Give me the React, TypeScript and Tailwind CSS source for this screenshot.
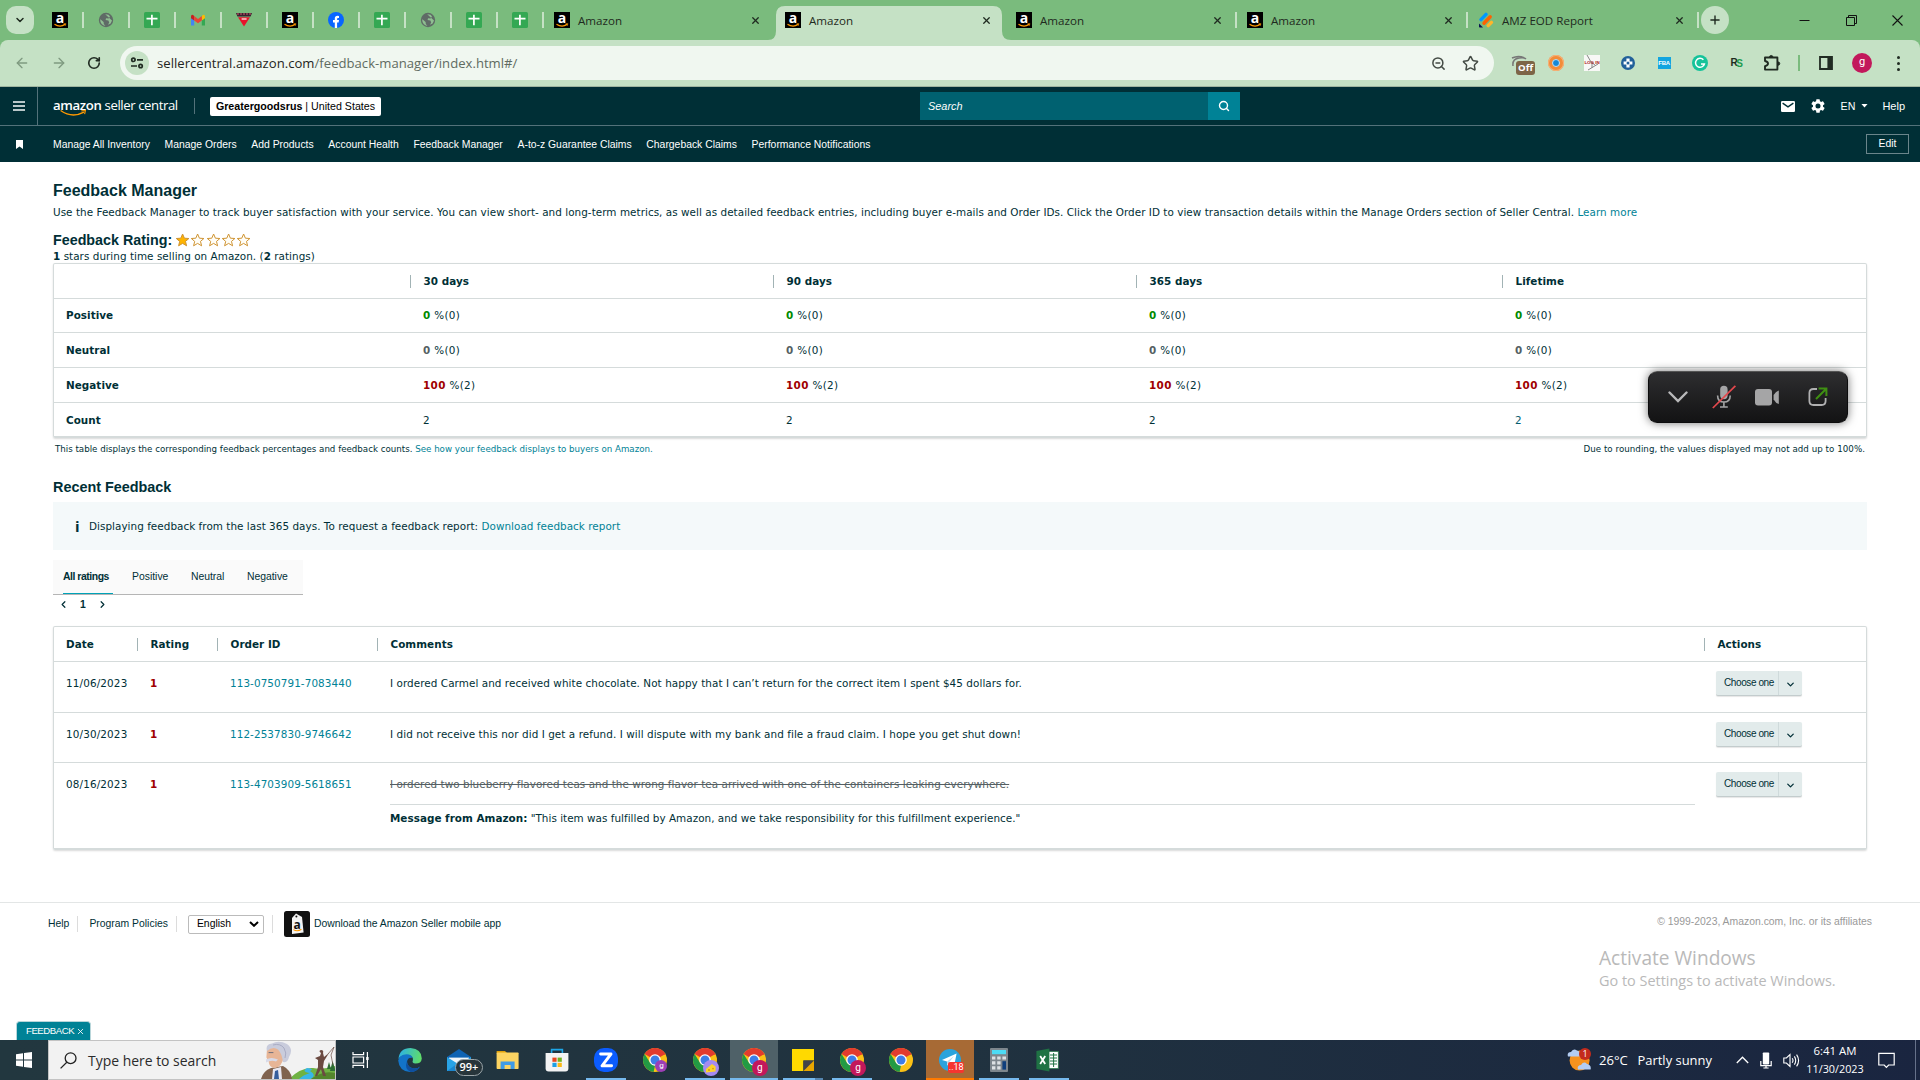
import React from 'react';
import { ArrowLeft, ArrowRight, ChevronDown, ChevronLeft, ChevronRight, Plus, RotateCw, Search, Star, X, ZoomOut } from 'lucide-react';
import clsx from 'clsx';

/* ---------- Favicons ---------- */

const AmazonIcon = () => (
    <svg viewBox="0 0 16 16" className="size-4 shrink-0 overflow-visible">
        <rect width="16" height="16" fill="#000" />
        <text x="8" y="10.8" textAnchor="middle" fontSize="14" fontWeight="700" fill="#fff" fontFamily="Open Sans, sans-serif">a</text>
        <path d="M2.5 12.2 Q8 15.8 13 12.4" fill="none" stroke="#f90" strokeWidth="1.3" />
        <path d="M11.6 11.9 L13.8 11.7 L13.3 13.7" fill="none" stroke="#f90" strokeWidth="0.8" />
    </svg>
);

const GlobeIcon = () => (
    <svg viewBox="0 0 16 16" className="size-4 shrink-0">
        <circle cx="8" cy="8" r="7.2" fill="#5f6b66" />
        <path d="M2.4 7.2 L5.6 10 L5.8 12 L7.4 14 A6 6 0 0 1 2.2 8Z M7.2 2.2 L10.5 2.8 L12 4.4 L10.6 6.4 L8 6.2 L7.6 8 L10.4 8.6 L11.2 10.4 L10 12.8 L12.6 11.6 L14 8.4" fill="#8fbf92" />
    </svg>
);

const SheetsIcon = () => (
    <svg viewBox="0 0 16 16" className="size-4 shrink-0">
        <rect width="16" height="16" rx="1.6" fill="#34a853" />
        <path d="M2.5 6.6 H13.5 M7.9 2.8 V13.2" stroke="#fff" strokeWidth="1.7" />
    </svg>
);

const GmailIcon = () => (
    <svg viewBox="0 0 16 16" className="size-4 shrink-0">
        <path d="M1 4 V13.6 H4.2 V6.4Z" fill="#4285f4" />
        <path d="M15 4 V13.6 H11.8 V6.4Z" fill="#34a853" />
        <path d="M11.8 4 L13 3 Q15 2.4 15 4.6 V6.2 L11.8 8.4Z" fill="#fbbc04" />
        <path d="M4.2 4 L3 3 Q1 2.4 1 4.6 V6.2 L4.2 8.4Z" fill="#c5221f" />
        <path d="M4.2 4 L8 6.9 L11.8 4 V8.4 L8 11.2 L4.2 8.4Z" fill="#ea4335" />
    </svg>
);

const TriangleIcon = () => (
    <svg viewBox="0 0 16 16" className="size-4 shrink-0">
        <path d="M0 1 H16 L14.6 4.6 H1.4Z" fill="#3a2230" />
        <path d="M1 2 H15" stroke="#d05a6a" strokeWidth="1" strokeDasharray="2 1" />
        <path d="M2 5.2 H14 L8 14.6Z" fill="#e8132b" />
        <path d="M5.6 7 H10.6" stroke="#fff" strokeWidth="1.2" />
    </svg>
);

const FacebookIcon = () => (
    <svg viewBox="0 0 16 16" className="size-4 shrink-0">
        <circle cx="8" cy="8" r="8" fill="#0866ff" />
        <path d="M6.8 16 V10.4 H5 V8 H6.8 V6.6 Q6.8 3.8 9.6 3.8 L11 3.9 V6 H10 Q9.1 6 9.1 7 V8 H11 L10.6 10.4 H9.1 V16Z" fill="#fff" />
    </svg>
);

const JotformIcon = () => (
    <svg viewBox="0 0 16 16" className="size-4 shrink-0">
        <g strokeLinecap="round" fill="none" strokeWidth="3.4">
            <path d="M3 7.6 L8 2.4" stroke="#0099ff" />
            <path d="M6 11.2 L12.2 4.8" stroke="#ff6100" />
            <path d="M10.2 13.6 L13.4 10.4" stroke="#ffb629" />
        </g>
        <path d="M1 11.4 L5 15.6 H1.8 Q1 15.6 1 14.8Z" fill="#0a1551" />
    </svg>
);

const pinned = [AmazonIcon, GlobeIcon, SheetsIcon, GmailIcon, TriangleIcon, AmazonIcon, FacebookIcon, SheetsIcon, GlobeIcon, SheetsIcon, SheetsIcon];

const tabs = [
    { title: 'Amazon', Icon: AmazonIcon, active: false, divider: false },
    { title: 'Amazon', Icon: AmazonIcon, active: true, divider: false },
    { title: 'Amazon', Icon: AmazonIcon, active: false, divider: true },
    { title: 'Amazon', Icon: AmazonIcon, active: false, divider: true },
    { title: 'AMZ EOD Report', Icon: JotformIcon, active: false, divider: true },
];

/* ---------- Browser chrome ---------- */

const TabStrip = () => (
    <div className="flex h-10 bg-[#7abb7d] text-[#1f2a20]">
        <div className="flex w-[38px] items-center pl-1.5">
            <div className="flex size-7 items-center justify-center rounded-[10px] bg-[#c5e1c5]">
                <ChevronDown size={12} strokeWidth={3} />
            </div>
        </div>
        <div className="flex items-center">
            {pinned.map((Icon, i) => (
                <div key={i} className="flex w-[46px] items-center justify-between pl-3.5">
                    <Icon />
                    <div className="h-4 w-0.5 bg-[#c5e1c5]" />
                </div>
            ))}
        </div>
        <div className="flex">
            {tabs.map((t, i) => (
                <div key={i} className="relative flex w-[231px] items-center">
                    {t.active && (
                        <svg viewBox="0 0 245 34" className="absolute -left-[7px] top-1.5 h-[34px] w-[245px]">
                            <path d="M0 34 Q8 34 8 25 V9 Q8 0 17 0 H225 Q234 0 234 9 V25 Q234 34 243 34Z" fill="#c5e1c5" />
                        </svg>
                    )}
                    <div className="relative flex flex-1 items-center pl-[10px]">
                        <t.Icon />
                        <span className="ml-2 flex-1 pt-0.5 font-['Open_Sans',sans-serif] text-[11.6px] leading-4">{t.title}</span>
                        <X size={11} strokeWidth={2.8} className="mr-[12px]" />
                        <div className={clsx('h-4 w-0.5', t.divider && 'bg-[#c5e1c5]')} />
                    </div>
                </div>
            ))}
        </div>
        <div className="flex flex-1 items-center">
            <div className="ml-0.5 flex size-7 items-center justify-center rounded-full bg-[#c5e1c5]">
                <Plus size={14} strokeWidth={2.4} />
            </div>
            <div className="ml-auto flex items-center gap-[35.5px] pr-[17px] text-[#111]">
                <svg className="size-[11px]" viewBox="0 0 11 11"><path d="M0.5 5.5 H10.5" stroke="currentColor" /></svg>
                <svg className="size-[11px]" viewBox="0 0 11 11" fill="none" stroke="currentColor"><path d="M0.5 2.5 H8.5 V10.5 H0.5Z M2.5 2.5 V0.5 H10.5 V8.5 H8.5" /></svg>
                <svg className="size-[11px]" viewBox="0 0 11 11" fill="none" stroke="currentColor" strokeWidth="1.1"><path d="M0.5 0.5 L10.5 10.5 M10.5 0.5 L0.5 10.5" /></svg>
            </div>
        </div>
    </div>
);

const Ext: React.FC<{ children: React.ReactNode }> = ({ children }) => (
    <div className="relative flex w-9 items-center justify-center">{children}</div>
);

const Toolbar = () => (
    <div className="bg-[#7abb7d]">
        <div className="flex h-[47px] items-center rounded-t-lg border-b border-[#9fb5a0] bg-[#c5e1c5] text-[#202b22]">
            <div className="flex w-[120px] items-center gap-[20.5px] pl-[14px]">
                <ArrowLeft size={16} className="text-[#7f9a80]" />
                <ArrowRight size={16} className="text-[#7f9a80]" />
                <RotateCw size={14} strokeWidth={2.8} />
            </div>
            <div className="flex h-[34px] w-[1374px] items-center rounded-full bg-[#f0f7f0] pl-[5px]">
                <div className="flex size-6 items-center justify-center rounded-full bg-[#c5e1c5]">
                    <svg viewBox="0 0 14 12" className="h-3 w-3.5" fill="none" stroke="currentColor" strokeWidth="1.7">
                        <circle cx="3.4" cy="2.8" r="1.7" />
                        <path d="M7 2.8 H13 M1 9 H7" />
                        <circle cx="10.6" cy="9" r="1.7" />
                    </svg>
                </div>
                <div className="ml-2 font-['Open_Sans',sans-serif] text-[13.1px] leading-5 tracking-[0.02px] text-[#1f2420]">
                    sellercentral.amazon.com<span className="text-[#5f6b61]">/feedback-manager/index.html#/</span>
                </div>
                <div className="ml-auto flex items-center gap-4 pr-[15px] text-[#444b45]">
                    <ZoomOut size={15} strokeWidth={2.4} />
                    <Star size={17} strokeWidth={2.1} />
                </div>
            </div>
            <div className="flex h-full items-center pl-2">
                <Ext>
                    <svg viewBox="0 0 18 12" className="-mt-1 h-3 w-[18px]"><path d="M2 11 Q1 4 8 3 Q13 2 15 4 M1 3 Q7 0 13 2.6" fill="none" stroke="#777" strokeWidth="1.5" /></svg>
                    <div className="absolute left-[14px] top-0.5 rounded-[3px] bg-[#7d6547] px-0.5 font-['Open_Sans',sans-serif] text-[9.6px] font-bold leading-[14px] text-white">Off</div>
                </Ext>
                <Ext>
                    <div className="flex size-4 items-center justify-center rounded-full bg-[#f28c3a] ring-1 ring-[#f7b27a] ring-inset">
                        <div className="size-2 rounded-full border border-[#bfe0f7] bg-[#1688d8]" />
                    </div>
                </Ext>
                <Ext>
                    <svg viewBox="0 0 16 16" className="size-4 overflow-visible">
                        <rect width="16" height="16" fill="#f8f8f6" />
                        <path d="M3 0 L7 7 L11 10 M4 15 L14 9 M8 7 V13" stroke="#888" strokeWidth="1" fill="none" />
                        <text x="8" y="8.6" textAnchor="middle" fontSize="4.4" fontWeight="700" fill="#a11" fontFamily="Liberation Sans">LOG IN</text>
                    </svg>
                </Ext>
                <Ext>
                    <svg viewBox="0 0 14 14" className="size-3.5">
                        <circle cx="7" cy="7" r="7" fill="#22609a" />
                        <path d="M5.4 2.6 H8.6 V5.4 H11.4 V8.6 H8.6 V11.4 H5.4 V8.6 H2.6 V5.4 H5.4Z" fill="#fff" />
                        <circle cx="7" cy="7" r="1.5" fill="#22609a" />
                    </svg>
                </Ext>
                <Ext>
                    <div className="h-3 w-[13px] bg-[#12a5e0] pt-[3px] text-center font-['Liberation_Sans',sans-serif] text-[6px] font-bold leading-[6px] tracking-tighter text-white">FBA</div>
                </Ext>
                <Ext>
                    <svg viewBox="0 0 16 16" className="size-4">
                        <circle cx="8" cy="8" r="8" fill="#15c39a" />
                        <path d="M11.4 4.8 A4.5 4.5 0 1 0 12.4 9 H9" fill="none" stroke="#fff" strokeWidth="1.5" />
                    </svg>
                </Ext>
                <Ext>
                    <div className="font-['Liberation_Sans',sans-serif] text-[10px] font-bold leading-3 tracking-[-1.5px] text-[#1d2b20]">R<span className="relative top-px text-[#1d9b4e]">S</span></div>
                </Ext>
                <Ext>
                    <svg viewBox="0 0 18 18" className="size-[18px]" fill="none" stroke="currentColor" strokeWidth="1.9">
                        <path d="M2 3.5 H14.4 V15.6 H2 V12.2 Q5 11.6 5 9.6 Q5 7.6 2 7Z" strokeLinejoin="round" />
                        <path d="M6.4 3.4 Q6.4 1.4 8.2 1.4 Q10 1.4 10 3.4Z M14.6 7.8 Q16.8 7.8 16.8 9.6 Q16.8 11.4 14.6 11.4Z" fill="currentColor" strokeWidth="0.8" />
                    </svg>
                </Ext>
                <div className="flex w-[18px] justify-center"><div className="h-4 w-0.5 bg-[#7abb7d]" /></div>
                <Ext>
                    <svg viewBox="0 0 14 14" className="size-3.5"><path d="M1 1 H13 V13 H1Z" fill="none" stroke="currentColor" strokeWidth="1.8" /><path d="M8.4 1 H13 V13 H8.4Z" fill="currentColor" /></svg>
                </Ext>
                <Ext>
                    <div className="size-5 rounded-full bg-[#c2185b] text-center font-['Roboto',sans-serif] text-[11px] leading-[18px] text-white">g</div>
                </Ext>
                <Ext>
                    <div className="flex flex-col gap-[3px]">
                        {[0, 1, 2].map((i) => <div key={i} className="size-[3px] rounded-full bg-current" />)}
                    </div>
                </Ext>
            </div>
        </div>
    </div>
);

/* ---------- Seller Central header ---------- */

const navLinks = ['Manage All Inventory', 'Manage Orders', 'Add Products', 'Account Health', 'Feedback Manager', 'A-to-z Guarantee Claims', 'Chargeback Claims', 'Performance Notifications'];

const Header = () => (
    <header className="bg-[#002f36] text-white">
        <div className="flex h-[39px] items-center border-b border-[#53727a] text-[10.66px] leading-4">
            <div className="flex h-full w-[38px] items-center border-r border-[#53727a] pl-[13px]">
                <div className="flex flex-col gap-[2px]">
                    {[0, 1, 2].map((i) => <div key={i} className="h-[2px] w-3 bg-[#b9c7c9]" />)}
                </div>
            </div>
            <div className="relative ml-[15px] flex w-[128px] -translate-y-[1.5px] items-baseline gap-[3px] whitespace-nowrap font-['Open_Sans',sans-serif] leading-4">
                <span className="text-[13.2px] font-semibold tracking-[-0.35px]">amazon</span>
                <span className="text-[13.2px] tracking-[-0.42px]">seller central</span>
                <svg viewBox="0 0 28 8" className="absolute left-[7px] top-[13px] h-2 w-7" fill="none" stroke="#f90">
                    <path d="M0.6 1 Q12 9 24 2.6" strokeWidth="1.4" />
                    <path d="M21.4 1.4 L25.4 1 L24.6 4.6" strokeWidth="1.1" />
                </svg>
            </div>
            <div className="ml-[13px] h-4 w-px bg-[#53727a]" />
            <div className="ml-[15px] flex h-[19px] w-[171px] items-center justify-center rounded-xs bg-white text-black">
                <span className="whitespace-pre"><b>Greatergoodsrus</b> | United States</span>
            </div>
            <div className="ml-[539px] flex h-7 w-[288px] items-center bg-[#006170] pl-2 text-[10.9px] italic">Search</div>
            <div className="flex h-7 w-8 items-center justify-center bg-[#008296]"><Search size={12} strokeWidth={2.8} /></div>
            <div className="ml-auto flex items-center pr-[15px]">
                <svg viewBox="0 0 14 11" className="mr-4 h-[11px] w-3.5">
                    <rect width="14" height="11" rx="1.2" fill="#fff" />
                    <path d="M1.6 2.2 L7 5.8 L12.4 2.2" fill="none" stroke="#002f36" strokeWidth="1.4" />
                </svg>
                <svg viewBox="2 2 20 20" className="mr-4 size-3.5">
                    <path fill="#fff" d="M19.14 12.94c.04-.3.06-.61.06-.94s-.02-.64-.07-.94l2.03-1.58a.49.49 0 0 0 .12-.61l-1.92-3.32a.49.49 0 0 0-.59-.22l-2.39.96a7 7 0 0 0-1.62-.94l-.36-2.54A.48.48 0 0 0 13.92 2.4h-3.84a.48.48 0 0 0-.47.41l-.36 2.54c-.59.24-1.13.57-1.62.94l-2.39-.96a.48.48 0 0 0-.59.22L2.74 8.87a.48.48 0 0 0 .12.61l2.03 1.58a6 6 0 0 0 0 1.88l-2.03 1.58a.49.49 0 0 0-.12.61l1.92 3.32c.12.22.37.29.59.22l2.39-.96c.5.38 1.03.7 1.62.94l.36 2.54c.05.24.24.41.48.41h3.84c.24 0 .44-.17.47-.41l.36-2.54a7 7 0 0 0 1.62-.94l2.39.96c.22.08.47 0 .59-.22l1.92-3.32a.48.48 0 0 0-.12-.61zM12 15.6A3.6 3.6 0 1 1 12 8.4a3.6 3.6 0 0 1 0 7.2" />
                </svg>
                <span className="mr-[6px]">EN</span>
                <svg viewBox="0 0 7 4" className="mr-[14px] h-[3.5px] w-[7px]"><path d="M0 0 H7 L3.5 4Z" fill="#fff" /></svg>
                <span className="text-[11px]">Help</span>
            </div>
        </div>
        <nav className="flex h-9 items-center text-[10.38px] leading-4">
            <svg viewBox="0 0 7 9" className="ml-4 h-[9px] w-[7px]"><path d="M0 0 H7 V9 L3.5 6.4 L0 9Z" fill="#fff" /></svg>
            <div className="ml-[30px] flex gap-[14.7px] pt-0.5">
                {navLinks.map((l) => <span key={l}>{l}</span>)}
            </div>
            <div className="ml-auto mr-[11px] flex h-5 w-[43px] items-center justify-center border border-[#6a858b]">Edit</div>
        </nav>
    </header>
);

/* ---------- Feedback summary ---------- */

const summary = [
    { label: 'Positive', value: '0', rest: ' %(0)', color: 'text-[#008a00]', height: 'h-[34px]' },
    { label: 'Neutral', value: '0', rest: ' %(0)', color: 'text-[#555f63]', height: 'h-[35px]' },
    { label: 'Negative', value: '100', rest: ' %(2)', color: 'text-[#a00000]', height: 'h-[35px]' },
];

const summaryCols = 'grid grid-cols-[357px_363px_363px_366px_1fr]';

const Divider = () => <div className="h-[13px] w-px shrink-0 bg-[#a2b3b5]" />;

const SummaryTable = () => (
    <div className="w-[1814px] rounded-xs border border-b-2 border-[#d5dbdb] shadow-[0_1px_2px_rgba(0,0,0,0.15)]">
        <div className={clsx(summaryCols, 'h-[35px] items-center border-b border-[#d5dbdb] font-bold')}>
            <span />
            {['30 days', '90 days', '365 days', 'Lifetime'].map((h) => (
                <div key={h} className="-ml-px flex items-center">
                    <Divider />
                    <span className="pl-[12.5px]">{h}</span>
                </div>
            ))}
        </div>
        {summary.map((r) => (
            <div key={r.label} className={clsx(summaryCols, r.height, 'items-center border-b border-[#d5dbdb] pb-px')}>
                <b className="pl-3">{r.label}</b>
                {[0, 1, 2, 3].map((i) => (
                    <span key={i} className="whitespace-pre pl-3 tracking-[0.35px]"><b className={r.color}>{r.value}</b>{r.rest}</span>
                ))}
            </div>
        ))}
        <div className={clsx(summaryCols, 'h-[33px] items-center')}>
            <b className="pl-3">Count</b>
            {[0, 1, 2].map((i) => <span key={i} className="pl-3">2</span>)}
            <span className="pl-3 text-[#055d70]">2</span>
        </div>
    </div>
);

const Stars = () => (
    <div className="ml-[3px] flex pb-px">
        {[0, 1, 2, 3, 4].map((i) => (
            <svg key={i} viewBox="0 0 15 14" className="h-3.5 w-[15.2px]">
                <path d="M7.5 1 L9.3 5.2 L13.8 5.5 L10.4 8.4 L11.5 12.8 L7.5 10.4 L3.5 12.8 L4.6 8.4 L1.2 5.5 L5.7 5.2Z" fill={i === 0 ? '#ffb400' : '#fffdf6'} stroke="#cf9433" strokeWidth="1" />
            </svg>
        ))}
    </div>
);

/* ---------- Recent feedback ---------- */

const feedback = [
    { date: '11/06/2023', order: '113-0750791-7083440', text: 'I ordered Carmel and received white chocolate. Not happy that I can’t return for the correct item I spent $45 dollars for.' },
    { date: '10/30/2023', order: '112-2537830-9746642', text: 'I did not receive this nor did I get a refund. I will dispute with my bank and file a fraud claim. I hope you get shut down!' },
    { date: '08/16/2023', order: '113-4703909-5618651', text: 'I ordered two blueberry flavored teas and the wrong flavor tea arrived with one of the containers leaking everywhere.', message: '"This item was fulfilled by Amazon, and we take responsibility for this fulfillment experience."' },
];

const feedbackCols = 'grid grid-cols-[84px_80px_160px_1327px_1fr]';

const ChooseButton = () => (
    <div className="-ml-px mt-[9px] flex h-[25px] w-[86px] rounded-xs border-b border-[#c3cccd] bg-[#e2ebeb] font-['Liberation_Sans',sans-serif] text-[10px] tracking-[-0.4px] shadow-[0_1px_1px_rgba(0,0,0,0.1)]">
        <div className="w-[63px] whitespace-nowrap border-r border-[#cfdadb] pl-2 leading-6">Choose one</div>
        <div className="flex flex-1 items-center justify-center pt-0.5"><ChevronDown size={11} strokeWidth={2.8} /></div>
    </div>
);

const FeedbackTable = () => (
    <div className="w-[1814px] rounded-xs border border-b-2 border-[#d5dbdb] shadow-[0_1px_2px_rgba(0,0,0,0.15)]">
        <div className={clsx(feedbackCols, 'h-[35px] items-center border-b border-[#d5dbdb] font-bold')}>
            <span className="pl-3">Date</span>
            {['Rating', 'Order ID', 'Comments', 'Actions'].map((h) => (
                <div key={h} className="-ml-px flex items-center">
                    <Divider />
                    <span className="pl-[12.5px]">{h}</span>
                </div>
            ))}
        </div>
        {feedback.map((f, i) => (
            <div key={f.order} className={clsx(feedbackCols, i === 0 ? 'h-[51px]' : i === 1 ? 'h-[50px]' : 'h-[85px]', i < 2 && 'border-b border-[#d5dbdb]')}>
                <span className="pl-3 pt-[13px] tracking-[0.15px]">{f.date}</span>
                <b className="pl-3 pt-[13px] text-[#a00000]">1</b>
                <span className="pl-3 pt-[13px] tracking-[0.09px] text-[#008296]">{f.order}</span>
                <div className="pl-3 pr-[10px] pt-[13px]">
                    <p className={clsx(f.message ? 'text-[#555f63] line-through' : 'tracking-[0.07px]')}>{f.text}</p>
                    {f.message && (
                        <p className="mt-3 border-t border-[#d5dbdb] pt-[5px] tracking-[0.03px]"><b>Message from Amazon:</b> {f.message}</p>
                    )}
                </div>
                <div className="pl-3"><ChooseButton /></div>
            </div>
        ))}
    </div>
);

const Main = () => (
    <main className="h-[740px] pl-[53px] pt-[19px] font-['DejaVu_Sans',sans-serif] text-[10.4px] leading-4 tracking-[0.045px]">
        <h1 className="font-['Liberation_Sans',sans-serif] text-[16px] font-bold leading-5 tracking-normal">Feedback Manager</h1>
        <p className="mt-[3px] tracking-[0.05px]">
            Use the Feedback Manager to track buyer satisfaction with your service. You can view short- and long-term metrics, as well as detailed feedback entries, including buyer e-mails and Order IDs. Click the Order ID to view transaction details within the Manage Orders section of Seller Central. <a className="text-[#008296]">Learn more</a>
        </p>
        <div className="mt-[10px] flex h-5 items-center font-['Liberation_Sans',sans-serif] text-[14.3px] font-bold leading-5 tracking-normal">
            Feedback Rating: <Stars />
        </div>
        <p className="-mt-0.5 h-[15px]"><b>1</b> stars during time selling on Amazon. (<b>2</b> ratings)</p>
        <SummaryTable />
        <div className="flex w-[1814px] justify-between px-[2px] pt-[3px] text-[8.7px] tracking-[-0.01px]">
            <span>This table displays the corresponding feedback percentages and feedback counts. <a className="text-[#008296]">See how your feedback displays to buyers on Amazon.</a></span>
            <span className="tracking-[0.04px]">Due to rounding, the values displayed may not add up to 100%.</span>
        </div>
        <h2 className="mt-5 font-['Liberation_Sans',sans-serif] text-[14.4px] font-bold leading-5 tracking-normal">Recent Feedback</h2>
        <div className="mt-[5px] flex h-12 w-[1814px] items-center bg-[#f4f9fa] pl-[22px]">
            <span className="w-[14px] font-['Open_Sans',sans-serif] text-[15px] font-bold">i</span>
            <span>Displaying feedback from the last 365 days. To request a feedback report: <a className="text-[#008296]">Download feedback report</a></span>
        </div>
        <div className="mt-[10px] flex h-[35px] w-[250px] gap-[22.5px] border-b border-[#b5b5b5] bg-[#fafafa] pl-[10px] font-['Liberation_Sans',sans-serif] text-[10.4px] leading-[34px] tracking-normal">
            <span className="h-[34px] w-[50px] whitespace-nowrap border-b-[1.5px] border-[#00a3b8] font-bold tracking-[-0.45px]">All ratings</span>
            <span className="-ml-[3.5px]">Positive</span>
            <span>Neutral</span>
            <span>Negative</span>
        </div>
        <div className="flex h-[31px] items-start pl-[5px] pt-px">
            <ChevronLeft size={11} strokeWidth={2.6} className="mt-[3px]" />
            <span className="w-[28px] text-center font-['Liberation_Sans',sans-serif] font-bold leading-[17px]">1</span>
            <ChevronRight size={11} strokeWidth={2.6} className="mt-[3px]" />
        </div>
        <FeedbackTable />
    </main>
);

/* ---------- Footer ---------- */

const Footer = () => (
    <footer className="relative flex h-[138px] items-start border-t border-[#e3e6e6] pl-12 pt-[8px] text-[10.4px]">
        <div className="flex h-[26px] items-center leading-4">
            <span>Help</span>
            <div className="ml-2 h-4 w-px bg-[#dcdcdc]" />
            <span className="ml-[11px]">Program Policies</span>
            <div className="ml-2 h-4 w-px bg-[#dcdcdc]" />
            <div className="ml-[11px] flex h-[19px] w-[76px] items-center justify-between rounded-xs border border-[#bbb] pl-2 pr-1 text-black">
                <span>English</span>
                <svg viewBox="0 0 10 6" className="h-1.5 w-2.5"><path d="M1 1 L5 4.8 L9 1" fill="none" stroke="#000" strokeWidth="2" /></svg>
            </div>
            <div className="ml-2 h-[18px] w-px bg-[#dcdcdc]" />
            <svg viewBox="0 0 26 26" className="ml-[11px] size-[26px] overflow-visible">
                <rect width="26" height="26" rx="2.5" fill="#111" />
                <path d="M8 7 L12 2.6 L18 6 L19.6 21.4 L8 23Z" fill="#f4f4f4" />
                <circle cx="12.4" cy="5.6" r="1" fill="#111" />
                <text x="13" y="17.6" textAnchor="middle" fontSize="12" fontWeight="700" fill="#111" fontFamily="Open Sans, sans-serif">a</text>
                <path d="M9.4 18.6 Q13.4 21.2 17.4 18.2" fill="none" stroke="#f90" strokeWidth="1.1" />
            </svg>
            <span className="ml-1">Download the Amazon Seller mobile app</span>
        </div>
        <span className="ml-auto mr-12 mt-[3px] leading-4 text-[#999]">© 1999-2023, Amazon.com, Inc. or its affiliates</span>

        {/* Activation watermark */}
        <div className="absolute left-[1599px] top-[43px] font-['Open_Sans',sans-serif] text-[#b9b9b9]">
            <p className="text-[19.1px] leading-6">Activate Windows</p>
            <p className="text-[14.45px] leading-[21px]">Go to Settings to activate Windows.</p>
        </div>

        {/* Feedback tab */}
        <div className="absolute bottom-0 left-4 flex h-[19px] w-[75px] items-center rounded-t border border-b-0 border-[#b9d6da] bg-[#008296] pl-[9px] text-[9.6px] leading-4 tracking-[-0.45px] text-white">
            FEEDBACK <X size={9} strokeWidth={2.2} className="ml-0.5" />
        </div>
    </footer>
);

/* ---------- Floating call controls ---------- */

const CallControls = () => (
    <div className="absolute left-[1648px] top-[371px] flex h-[52px] w-[200px] items-center rounded-[9px] border border-[#0c0c0d] border-t-[#555] bg-linear-to-b from-[#2e2e30] to-[#131314] pl-[19px] shadow-[0_0_10px_rgba(0,0,0,0.55)]">
        <svg viewBox="0 0 20 12" className="h-3 w-5"><path d="M1.5 1.5 L10 10 L18.5 1.5" fill="none" stroke="#b9b9ba" strokeWidth="2.4" strokeLinecap="round" /></svg>
        <svg viewBox="0 0 24 24" className="ml-6 size-6">
            <rect x="8.2" y="0.8" width="7.4" height="13.4" rx="3.7" fill="#a5a5a6" />
            <path d="M5.6 10.4 Q5.6 17 11.9 17 Q18.2 17 18.2 10.4 M11.9 17 V21.6 M8 22 H15.8" fill="none" stroke="#a5a5a6" strokeWidth="1.6" />
            <path d="M0.8 23 L23.4 0.8" stroke="#e5484d" strokeWidth="1.7" />
        </svg>
        <svg viewBox="0 0 24 17" className="ml-[19px] h-[17px] w-6" fill="#a5a5a6">
            <rect width="17" height="16.4" rx="3" />
            <path d="M18.6 6 Q21 2 23.8 1.4 V15 Q21 14.4 18.6 10.4Z" />
        </svg>
        <svg viewBox="0 0 20 20" className="ml-[29px] size-5" fill="none" strokeWidth="1.8">
            <path d="M9 2 H5.4 Q1.4 2 1.4 6 V14 Q1.4 18 5.4 18 H13.6 Q17.6 18 17.6 14 V11" stroke="#b0b0b1" />
            <path d="M8 12 L18 2 M10.6 1.6 H18.4 V9" stroke="#3f8f12" strokeWidth="2" />
        </svg>
    </div>
);

/* ---------- Taskbar ---------- */

const ChromeIcon = () => (
    <svg viewBox="0 0 24 24" className="size-6">
        <circle cx="12" cy="12" r="12" fill="#fbc116" />
        <path d="M12 12 L1.6 6 A12 12 0 0 1 22.4 6Z" fill="#e33b2e" />
        <path d="M1.6 6 L7.2 15 L12 17.4 L10.6 23.9 A12 12 0 0 1 1.6 6Z" fill="#229a44" />
        <path d="M12 6.4 H22.6 L22.4 6 H12Z" fill="#e33b2e" />
        <circle cx="12" cy="12" r="5.8" fill="#fff" />
        <circle cx="12" cy="12" r="4.5" fill="#3f7de8" />
    </svg>
);

const ProfileBadge: React.FC<{ className: string; children: React.ReactNode }> = ({ className, children }) => (
    <div className={clsx("absolute flex items-center justify-center rounded-full font-['Roboto',sans-serif] leading-none text-white", className)}>{children}</div>
);

const apps: { icon: React.ReactNode; line?: string; bg?: string }[] = [
    {
        icon: (
            <svg viewBox="0 0 18 18" className="size-[18px]" fill="none" stroke="#fff" strokeWidth="1.2">
                <path d="M1 1 V3.6 H11.6 V1 M1 17 V14.4 H11.6 V17 M1 6 H11.6 V12 H1Z M15.4 1 V17" />
                <path d="M14.2 6 H16.6 V9 H14.2Z" fill="#fff" stroke="none" />
            </svg>
        ),
    },
    {
        icon: (
            <svg viewBox="0 0 24 24" className="size-6">
                <defs>
                    <linearGradient id="edgeTop" x1="0" x2="1" y1="0.2" y2="0.4"><stop stopColor="#2bb1e8" /><stop offset="1" stopColor="#5fdc6a" /></linearGradient>
                </defs>
                <path d="M0.4 11 Q1.6 0 12.6 0 Q23.6 1 23.8 10.4 Q23.4 15.6 17.4 15.6 Q13.6 15 14.8 12.8 Q16 8 10 7 Q3 6.6 0.4 11Z" fill="url(#edgeTop)" />
                <path d="M0.2 12.4 Q1.6 6.4 8.6 6.2 Q13.6 6.4 14.6 9.8 Q9.4 9 9 14 Q9.6 19.6 16 20.4 Q20 20.6 22 18.4 Q18.6 24 12 24 Q1 23 0.2 12.4Z" fill="#1374c8" />
                <path d="M9 13 Q9 20 16.4 20.4 Q20 20.6 22 18.4 Q18.6 24 12.6 24 Q6 21 9 13Z" fill="#0f4f9e" />
            </svg>
        ),
    },
    {
        icon: (
            <div className="relative size-6">
                <svg viewBox="0 0 24 24" className="size-6">
                    <path d="M0 9 L12 1 L24 9 V12 H0Z" fill="#0f63b3" />
                    <path d="M2 9.6 H22 V16 H2Z" fill="#f1f6fa" />
                    <path d="M0 9 L12 16.4 L24 9 V23 H0Z" fill="#29a3e6" />
                    <path d="M0 23 L14 13 L24 23Z" fill="#1b86cf" />
                </svg>
                <div className="absolute left-[8px] top-[11px] flex h-[17px] w-7 items-center justify-center rounded-full border border-[#9aa4a8] bg-[#27353b] font-['Open_Sans',sans-serif] text-[11px] font-semibold text-white">99+</div>
            </div>
        ),
    },
    {
        icon: (
            <svg viewBox="0 0 24 20" className="h-5 w-6">
                <path d="M0.6 1 H9 L11 3 H0.6Z" fill="#e0a10b" />
                <rect x="0.6" y="2.4" width="22" height="16.6" rx="0.8" fill="#fcd462" />
                <path d="M4.6 19 V11.4 H18.6 V19 H14.6 V15 H8.6 V19Z" fill="#3f9be6" />
            </svg>
        ),
    },
    {
        icon: (
            <svg viewBox="0 0 24 24" className="size-6">
                <path d="M6.6 6.6 V1.6 H17.4 V6.6" fill="none" stroke="#1ea7e8" strokeWidth="1.6" />
                <path d="M0.6 5 H23.4 V20.6 Q23.4 23.6 20.4 23.6 H3.6 Q0.6 23.6 0.6 20.6Z" fill="#f3f3f3" />
                <path d="M7.4 9.6 H11.6 V13.8 H7.4Z" fill="#e8471f" />
                <path d="M12.6 9.6 H16.8 V13.8 H12.6Z" fill="#72b11c" />
                <path d="M7.4 14.8 H11.6 V19 H7.4Z" fill="#1c9fe4" />
                <path d="M12.6 14.8 H16.8 V19 H12.6Z" fill="#fcb813" />
            </svg>
        ),
    },
    {
        icon: (
            <svg viewBox="0 0 24 24" className="size-6">
                <rect width="24" height="24" rx="10" fill="#0b5cff" />
                <path d="M6.6 6 H17 L8 17.8 H17.6" fill="none" stroke="#fff" strokeWidth="2.9" strokeLinejoin="round" strokeLinecap="round" />
            </svg>
        ),
        line: 'w-10 bg-[#76b9ed]',
    },
    { icon: <div className="relative"><ChromeIcon /><ProfileBadge className="left-3 top-3 size-3 bg-[#9c3fb5] text-[8px]">g</ProfileBadge></div> },
    {
        icon: (
            <div className="relative">
                <ChromeIcon />
                <ProfileBadge className="left-2.5 top-3 size-4 bg-[#a48bf2]">
                    <svg viewBox="0 0 12 12" className="size-3"><path d="M1 7 L7 2 L10.6 4.4 V9.6 L1 10.6Z" fill="#fbd22d" /><circle cx="4" cy="8" r="1" fill="#d99b00" /><circle cx="8" cy="6.6" r="0.9" fill="#d99b00" /></svg>
                </ProfileBadge>
            </div>
        ),
        line: 'w-10 bg-[#76b9ed]',
    },
    { icon: <div className="relative"><ChromeIcon /><ProfileBadge className="left-2.5 top-3 size-4 bg-[#c2185b] text-[10px]">g</ProfileBadge></div>, line: 'w-12 bg-[#76b9ed]', bg: 'bg-[#4f6168]' },
    {
        icon: (
            <svg viewBox="0 0 22 22" className="size-[22px]">
                <path d="M0 0 H22 V11.4 H11.4 V22 H0Z" fill="#ffd900" />
                <path d="M11.4 11.4 H22 L11.4 22Z" fill="#42434a" />
                <path d="M22 11.4 V22 H11.4Z" fill="#e9a600" />
            </svg>
        ),
        line: 'w-10 border-r-8 border-[#5686b0] bg-[#76b9ed]',
    },
    { icon: <div className="relative"><ChromeIcon /><ProfileBadge className="left-2.5 top-3 size-4 bg-[#c2185b] text-[10px]">g</ProfileBadge></div>, line: 'w-10 bg-[#76b9ed]' },
    { icon: <ChromeIcon /> },
    {
        icon: (
            <div className="relative">
                <svg viewBox="0 0 24 24" className="size-6">
                    <circle cx="12" cy="12" r="11" fill="#2ba3dc" />
                    <path d="M4 12 L18.6 5.6 L16 18.6 L11.6 15.4 L9.2 17.4 L9 13.6Z" fill="#fff" />
                    <path d="M9 13.6 L16 8 L11 14.4 L9.2 17.4Z" fill="#b8d9ea" />
                </svg>
                <div className="absolute left-[10px] top-[14px] h-[11px] w-4 rounded-xs bg-[#f5352f] text-center font-['Roboto',sans-serif] text-[9px] leading-[11px] text-white">..18</div>
            </div>
        ),
        line: 'w-12 bg-[#ff7a00]',
        bg: 'bg-[#a76a35]',
    },
    {
        icon: (
            <svg viewBox="0 0 18 24" className="h-6 w-[18px]">
                <rect width="18" height="24" rx="1" fill="#7d868d" />
                <rect x="2" y="2" width="14" height="4.2" fill="#4ddcf5" />
                <path d="M2 8.4 H5.4 V11.6 H2Z M7.2 8.4 H10.6 V11.6 H7.2Z M12.4 8.4 H16 V11.6 H12.4Z M2 13.2 H5.4 V16.6 H2Z M7.2 13.2 H10.6 V16.6 H7.2Z M2 18.2 H5.4 V21.6 H2Z M7.2 18.2 H10.6 V21.6 H7.2Z" fill="#dde1e4" />
                <path d="M12.4 13.2 H16 V21.6 H12.4Z" fill="#103f7c" />
            </svg>
        ),
        line: 'w-10 bg-[#76b9ed]',
    },
    {
        icon: (
            <svg viewBox="0 0 24 24" className="-ml-0.5 size-6">
                <path d="M12 3.4 H22.4 V20.6 H12Z" fill="#fff" stroke="#1f7244" strokeWidth="0.8" />
                <path d="M14 7 H21 M14 10 H21 M14 13 H21 M14 16 H21 M17.6 5 V19" stroke="#1f7244" strokeWidth="1" />
                <path d="M0.4 3 L13.4 0.6 V23.4 L0.4 21Z" fill="#1f7244" />
                <path d="M4.2 8 L9.2 16 M9.2 8 L4.2 16" stroke="#fff" strokeWidth="1.8" />
            </svg>
        ),
        line: 'w-10 bg-[#76b9ed]',
    },
];

/** Search highlight: a white-haired writer beside a river and a fishing figure */
const SearchArt = () => (
    <svg viewBox="0 0 74 38" className="h-[38px] w-[74px]">
        <path d="M28 38 Q40 26 52 27 Q62 29 74 25 V38Z" fill="#6fb244" />
        <path d="M46 27 Q40 31 49 32 Q42 34 38 38 H50 Q56 34 49 30 Q54 28 46 27Z" fill="#38b6ea" />
        <path d="M66 28 L68 21 L70 28Z M69 30 L71.6 20 L74 28 V30Z" fill="#2f6d34" />
        <path d="M50 38 Q62 29 74 32 V38Z" fill="#54852c" />
        <path d="M54 17 L59 15 L60 12 Q57 10 60 9 Q63 9 62 12 L63 16 L68 12 L63 20 L62 26 L65 35 H62 L60 28 L56 35 H54 L57 26 L57 19Z" fill="#6b4a41" />
        <path d="M67 13 L73 6 L70 14 L72 24" fill="none" stroke="#6b4a41" strokeWidth="0.7" />
        <path d="M0 38 Q2 30 10 27 L22 25 Q30 29 31 38Z" fill="#80634f" />
        <path d="M11 38 L12 28 L20 26 L21 38Z" fill="#e8e8f2" />
        <path d="M14 30 L17 29 L18 38 H13Z" fill="#355d9c" />
        <path d="M6 8 Q8 5 14 5 Q23 5 23 15 Q21 26 14 27 Q8 27 7.6 20 L5.4 16.4Z" fill="#e7b596" />
        <path d="M6 10 Q4 3 11 2.4 Q18 -1 26 3 Q33 8 28 16 Q27 22 22 21 Q21 13 17 8.6 Q12 5 6 10Z" fill="#c9ccdc" />
        <path d="M12 4 Q19 2 23 7 Q26 12 24 17" fill="none" stroke="#a9acc4" strokeWidth="1" />
        <path d="M5 18.6 Q10 15.4 17 18.6 L15 20.4 Q10 18.8 5 21.4Z" fill="#d8dae8" />
        <path d="M7.6 11.6 H12.4" stroke="#6f6f7c" strokeWidth="1" />
    </svg>
);

const Taskbar = () => (
    <div className="flex h-10 bg-linear-to-r from-[#22373f] via-[#20323f] to-[#1a2540] text-white">
        <div className="flex w-12 items-center pl-4">
            <svg viewBox="0 0 16 16" className="size-4" fill="#fff">
                <path d="M0 2.2 L7 1.2 V7.5 H0Z M8 1 L16 0 V7.5 H8Z M0 8.5 H7 V14.8 L0 13.8Z M8 8.5 H16 V16 L8 15Z" />
            </svg>
        </div>
        <div className="flex w-[288px] items-end border border-[#c3c3c3] bg-[#f2f2f2] text-[#2b2b2b]">
            <div className="flex h-full flex-1 items-center pl-[11px]">
                <svg viewBox="0 0 17 17" className="size-[17px]" fill="none" stroke="#222" strokeWidth="1.3"><circle cx="10.6" cy="6.2" r="5.4" /><path d="M6.8 10.2 L0.6 16.4" /></svg>
                <span className="ml-[11px] pt-px font-['Open_Sans',sans-serif] text-[13.95px] leading-5">Type here to search</span>
            </div>
            <SearchArt />
        </div>
        <div className="flex">
            {apps.map((a, i) => (
                <div key={i} className="relative flex w-[49.15px] justify-center">
                    <div className={clsx('flex h-full w-12 items-center justify-center', a.bg)}>{a.icon}</div>
                    {a.line && <div className={clsx('absolute bottom-0 h-0.5', a.line)} />}
                </div>
            ))}
        </div>
        <div className="ml-auto flex items-center font-['Open_Sans',sans-serif]">
            <div className="relative size-6">
                <svg viewBox="0 0 24 24" className="size-6">
                    <circle cx="12.6" cy="12.6" r="10" fill="#f6921e" />
                    <path d="M1 8.6 Q-0.4 4.4 4 4 Q6 0 10 2.4 Q14 3.4 12.6 8.6Z" fill="#b3cdf3" />
                    <path d="M11 21.6 Q9.6 17.6 14 17 Q17 12.6 20 16 Q24.6 17 23.6 21.6Z" fill="#b3cdf3" />
                </svg>
                <div className="absolute left-3 top-0 size-3 rounded-full bg-[#c42b1c] text-center text-[9px] leading-3">1</div>
            </div>
            <span className="ml-2 w-[38.5px] whitespace-nowrap text-[13.1px] leading-5">26°C</span>
            <span className="w-[98.5px] whitespace-nowrap text-[12.95px] leading-5">Partly sunny</span>
            <svg viewBox="0 0 13 8" className="h-2 w-[13px]"><path d="M0.8 7 L6.5 1.2 L12.2 7" fill="none" stroke="#fff" strokeWidth="1.3" /></svg>
            <svg viewBox="0 0 12 17" className="ml-[11px] h-[17px] w-3"><rect x="2.8" y="0.4" width="6.4" height="12" rx="0.8" fill="#fff" /><path d="M0.8 9 V13.6 H11.2 V9 M6 13.6 V16 M3.4 16 H8.6" fill="none" stroke="#fff" strokeWidth="1.2" /></svg>
            <svg viewBox="0 0 17 15" className="ml-[11px] h-[15px] w-[17px]" fill="none" stroke="#fff" strokeWidth="1.1">
                <path d="M0.8 5 H3.4 L7 1.6 V13.4 L3.4 10 H0.8Z M9.2 5.2 Q10.8 7.5 9.2 9.8 M11.4 3.4 Q14 7.5 11.4 11.6 M13.6 1.6 Q17.6 7.5 13.6 13.4" />
            </svg>
            <div className="ml-[6px] w-[58px] text-center leading-[18px]">
                <p className="text-[11.4px]">6:41 AM</p>
                <p className="text-[10.8px]">11/30/2023</p>
            </div>
            <svg viewBox="0 0 17 17" className="ml-[14px] mt-px h-[17px] w-[17px]"><path d="M0.8 1.4 H16.2 V13 H10.6 L8.4 15.4 L6.2 13 H0.8Z" fill="none" stroke="#fff" strokeWidth="1.2" /></svg>
            <div className="ml-[20px] mr-1 h-10 w-px bg-[#66718a]" />
        </div>
    </div>
);

export default function App() {
    return (
        <div className="relative h-[1080px] w-[1920px] overflow-hidden bg-white font-['Liberation_Sans',Arial,sans-serif] text-[#002f36]">
            <TabStrip />
            <Toolbar />
            <Header />
            <Main />
            <Footer />
            <Taskbar />
            <CallControls />
        </div>
    );
}
